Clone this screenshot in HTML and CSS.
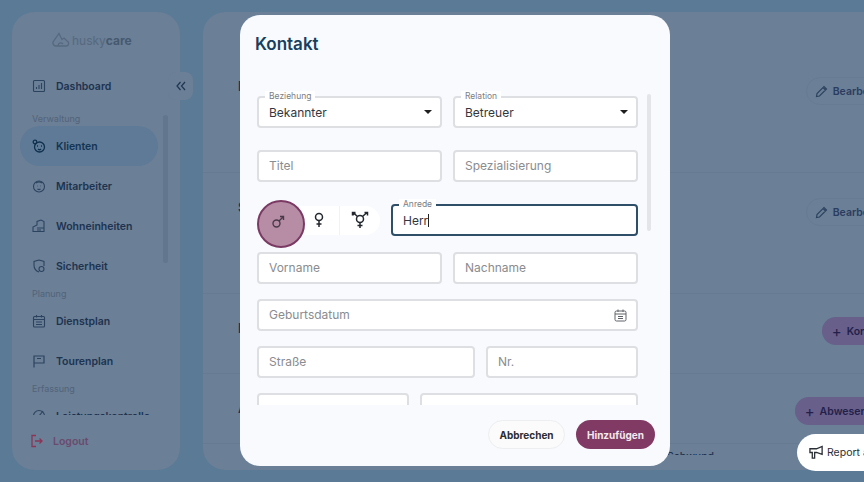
FILE: index.html
```html
<!DOCTYPE html>
<html lang="de">
<head>
    <meta charset="UTF-8">
    <meta name="viewport" content="width=device-width, initial-scale=1.0">
    <title>huskycare - Kontakt</title>
    <link rel="stylesheet" href="styles.css">
</head>
<body>
    <div class="seite">
        <aside class="sidebar">
            <div class="logo">
                <svg width="18" height="15" viewBox="0 0 18 15" fill="none" stroke="#56697f" stroke-width="1.3"><path d="M4 14 H14 C17 14 17.5 10 15 9 L12 6 L10 7.500 L7 1.500 L1 10 C0.500 12 2 14 4 14 Z"/><path d="M6 14 C6 11 9 10 11 12"/></svg>
                <span class="logo-husky">husky</span><span class="logo-care">care</span>
            </div>
            <button class="einklappen">
                <svg width="10" height="10" viewBox="0 0 10 10" fill="none" stroke="#1f3552" stroke-width="1.2"><path d="M4.500 1 L1 5 L4.500 9 M9 1 L5.500 5 L9 9"/></svg>
            </button>
            <nav class="menu">
                <a class="item erstes">
                    <svg class="nav-icon" viewBox="0 0 14 14" fill="none" stroke="#2c4360" stroke-width="1.100"><rect x="1.500" y="1.500" width="11" height="11" rx="1"/><path d="M4.500 10 V8 M7 10 V6 M9.500 10 V4"/></svg>
                    Dashboard
                </a>
                <div class="gruppe">Verwaltung</div>
                <a class="item aktiv">
                    <svg class="nav-icon" viewBox="0 0 14 14" fill="none" stroke="#10304f" stroke-width="1.300"><circle cx="7.500" cy="8" r="5"/><circle cx="3" cy="3" r="1.800"/><path d="M5 7 H6 M9 7 H10 M6 10 C7 11 8 11 9 10"/></svg>
                    Klienten
                </a>
                <a class="item">
                    <svg class="nav-icon" viewBox="0 0 14 14" fill="none" stroke="#2c4360" stroke-width="1.100"><circle cx="7" cy="7.500" r="5.500"/><path d="M4 4 C6 2.500 8 2.500 10 4 M5 7 H5.500 M8.500 7 H9 M5.500 10 C6.500 10.800 7.500 10.800 8.500 10"/></svg>
                    Mitarbeiter
                </a>
                <a class="item">
                    <svg class="nav-icon" viewBox="0 0 14 14" fill="none" stroke="#2c4360" stroke-width="1.100"><path d="M5 6 V2.500 L9 1 L12 2.500 V12.500 H1 V8 L5 6 Z M5 9 H12 M5 11 H9"/></svg>
                    Wohneinheiten
                </a>
                <a class="item">
                    <svg class="nav-icon" viewBox="0 0 14 14" fill="none" stroke="#2c4360" stroke-width="1.100"><path d="M7 1 L12 2.500 V7 M7 13 C4 12 2 10 2 6 V2.500 L7 1"/><circle cx="9.500" cy="10" r="2.500"/></svg>
                    Sicherheit
                </a>
                <div class="gruppe">Planung</div>
                <a class="item">
                    <svg class="nav-icon" viewBox="0 0 14 14" fill="none" stroke="#2c4360" stroke-width="1.100"><rect x="1.500" y="2.500" width="11" height="10.500" rx="1"/><path d="M1.500 5.500 H12.500 M4.500 1 V3.500 M9.500 1 V3.500 M4 8 H10 M4 10.500 H10"/></svg>
                    Dienstplan
                </a>
                <a class="item">
                    <svg class="nav-icon" viewBox="0 0 14 14" fill="none" stroke="#2c4360" stroke-width="1.200"><path d="M2 13.500 V2 H12 V9 H2 M5 4.500 H9"/></svg>
                    Tourenplan
                </a>
                <div class="gruppe">Erfassung</div>
                <a class="item">
                    <svg class="nav-icon" viewBox="0 0 14 14" fill="none" stroke="#2c4360" stroke-width="1.100"><circle cx="7" cy="7" r="5.500"/><path d="M7 7 L11 2"/></svg>
                    Leistungskontrolle
                </a>
            </nav>
            <div class="balken"></div>
            <a class="logout">
                <svg width="14" height="14" viewBox="0 0 14 14" fill="none" stroke="#8c3557" stroke-width="1.300"><path d="M6 1.500 H2 V12.500 H6 M5 7 H12 M9.500 4.500 L12 7 L9.500 9.500"/></svg>
                Logout
            </a>
        </aside>

        <main class="inhalt">
            <section class="abschnitt hoch">
                <h2>Kontakt</h2>
                <a class="pille bearbeiten">
                    <svg width="13" height="13" viewBox="0 0 13 13" fill="none" stroke="#2c4360" stroke-width="1.200"><path d="M1.500 11.500 L2 8.500 L9 1.500 L11.500 4 L4.500 11 Z M8 2.500 L10.500 5"/></svg>
                    Bearbeiten
                </a>
            </section>
            <section class="abschnitt hoch">
                <h2>Status</h2>
                <a class="pille bearbeiten">
                    <svg width="13" height="13" viewBox="0 0 13 13" fill="none" stroke="#2c4360" stroke-width="1.200"><path d="M1.500 11.500 L2 8.500 L9 1.500 L11.500 4 L4.500 11 Z M8 2.500 L10.500 5"/></svg>
                    Bearbeiten
                </a>
            </section>
            <section class="abschnitt mittel">
                <h2>Kontakte</h2>
                <a class="pille lila"><span class="plus">+</span> Kontakt</a>
            </section>
            <section class="abschnitt kurz">
                <h2>Abwesenheit</h2>
                <a class="pille lila"><span class="plus">+</span> Abwesenheit</a>
            </section>
            <div class="fuss">Schwund</div>
        </main>
    </div>

    <a class="report">
        <svg width="15" height="15" viewBox="0 0 16 16" fill="none" stroke="#2b2f36" stroke-width="1.400"><path d="M1 4 H8 L14 1.500 V10 L8 8 H6 V14 H3.500 V8 H1 Z"/></svg>
        Report a bug
    </a>

    <div class="modal">
        <h1>Kontakt</h1>
        <div class="leiste"></div>
        <form class="formular">
            <div class="zeile abstand-gross">
                <div class="feld">
                    <label class="schwebend">Beziehung</label>
                    <span class="wert oben">Bekannter</span>
                    <span class="pfeil"></span>
                </div>
                <div class="feld">
                    <label class="schwebend">Relation</label>
                    <span class="wert oben">Betreuer</span>
                    <span class="pfeil"></span>
                </div>
            </div>
            <div class="zeile abstand-gross">
                <div class="feld"><span class="platzhalter">Titel</span></div>
                <div class="feld"><span class="platzhalter">Spezialisierung</span></div>
            </div>
            <div class="zeile abstand-anrede">
                <div class="geschlecht">
                    <button type="button" class="option gewaehlt">
                        <svg width="14" height="14" viewBox="0 0 14 14" fill="none" stroke="#4a3a48" stroke-width="1.400"><circle cx="5.500" cy="8.500" r="3.500"/><path d="M8 6 L12.500 1.500 M9 1.500 H12.500 V5"/></svg>
                    </button>
                    <button type="button" class="option">
                        <svg width="14" height="16" viewBox="0 0 14 16" fill="none" stroke="#23282e" stroke-width="1.500"><circle cx="7" cy="5" r="3.500"/><path d="M7 8.500 V15 M4.500 12 H9.500"/></svg>
                    </button>
                    <button type="button" class="option">
                        <svg width="18" height="18" viewBox="0 0 18 18" fill="none" stroke="#23282e" stroke-width="1.500"><circle cx="9" cy="8" r="3.500"/><path d="M9 11.500 V17 M6.500 14.500 H11.500 M6.500 5.500 L2 1.500 M11.500 5.500 L16 1.500 M1.500 4.500 V1.500 H4.500 M13.500 1.500 H16.500 V4.500 M2 4 L4.500 1.800"/></svg>
                    </button>
                </div>
                <div class="feld fokus">
                    <label class="schwebend">Anrede</label>
                    <span class="wert">Herr<span class="cursor"></span></span>
                </div>
            </div>
            <div class="zeile abstand-klein">
                <div class="feld"><span class="platzhalter">Vorname</span></div>
                <div class="feld"><span class="platzhalter">Nachname</span></div>
            </div>
            <div class="zeile abstand-klein">
                <div class="feld">
                    <span class="platzhalter">Geburtsdatum</span>
                    <svg class="kalender" width="13" height="13" viewBox="0 0 13 13" fill="none" stroke="#5e6268" stroke-width="1"><rect x="1" y="2" width="11" height="10" rx="1.500"/><path d="M1 5 H12 M4 0.500 V3 M9 0.500 V3 M4 7.500 H9 M4 9.500 H9"/></svg>
                </div>
            </div>
            <div class="zeile abstand-klein">
                <div class="feld strasse"><span class="platzhalter">Straße</span></div>
                <div class="feld"><span class="platzhalter">Nr.</span></div>
            </div>
            <div class="zeile">
                <div class="feld plz"></div>
                <div class="feld"></div>
            </div>
        </form>
        <div class="aktionen">
            <button type="button" class="abbrechen">Abbrechen</button>
            <button type="button" class="hinzufuegen">Hinzufügen</button>
        </div>
    </div>
</body>
</html>
```

FILE: styles.css
```css
* {
    box-sizing: border-box;
}

html, body {
    height: 100%;
}

body {
    margin: 0;
    background-color: #5b7a96;
    font-family: "Inter", "Open Sans", sans-serif;
    overflow: hidden;
    position: relative;
}

.seite {
    display: flex;
    gap: 23px;
    padding: 12px;
    height: 482px;
    width: 960px;
}

/* sidebar */
.sidebar {
    flex: 0 0 168px;
    background-color: #6b7f96;
    border-radius: 22px;
    position: relative;
    display: flex;
    flex-direction: column;
}

.logo {
    height: 54px;
    padding: 20px 0 0 40px;
    display: flex;
    align-items: flex-start;
    font-size: 12px;
    line-height: 18px;
    color: #56697f;
}

.logo svg {
    margin-right: 2px;
}

.logo-care {
    font-weight: 700;
    color: #455970;
}

.einklappen {
    position: absolute;
    left: 156px;
    top: 60px;
    width: 25px;
    height: 28px;
    border: none;
    border-radius: 8px;
    background-color: #6b7f96;
    padding: 0;
}

.menu {
    height: 349px;
    overflow: hidden;
}

.item {
    display: flex;
    align-items: center;
    gap: 10px;
    height: 40px;
    margin: 0 22px 0 8px;
    padding-left: 12px;
    border-radius: 20px;
    font-size: 10.500px;
    font-weight: 600;
    color: #1d3350;
    white-space: nowrap;
}

.item.erstes {
    margin-bottom: 5px;
}

.item.aktiv {
    background-color: #5e7a96;
    color: #143452;
}

.nav-icon {
    width: 14px;
    height: 14px;
    flex: none;
}

.gruppe {
    height: 15px;
    padding-left: 20px;
    font-size: 9px;
    line-height: 15px;
    color: #52647a;
}

.balken {
    position: absolute;
    left: 151px;
    top: 103px;
    width: 5px;
    height: 148px;
    border-radius: 3px;
    background-color: #62768d;
}

.logout {
    display: flex;
    align-items: center;
    gap: 9px;
    padding: 19px 0 0 18px;
    font-size: 10.500px;
    font-weight: 600;
    color: #6a4b6e;
}

/* inhalt hinter dem dialog */
.inhalt {
    flex: 0 0 720px;
    background-color: #6b7f96;
    border-radius: 22px;
    padding-top: 40px;
    overflow: hidden;
}

.abschnitt {
    display: flex;
    justify-content: space-between;
    padding: 0 27px 0 35px;
    border-bottom: 1px solid #667b92;
}

.abschnitt.hoch {
    height: 121px;
}

.abschnitt.mittel {
    height: 80px;
}

.abschnitt.kurz {
    height: 70px;
}

.abschnitt h2 {
    margin: 26px 0 0;
    font-size: 13px;
    color: #1d3350;
}

.pille {
    display: flex;
    align-items: center;
    gap: 5px;
    height: 28px;
    margin-top: 25px;
    padding: 0 10px;
    border-radius: 14px;
    border: 1px solid #677b92;
    font-size: 10.500px;
    font-weight: 600;
    color: #2a3c5f;
}

.pille.bearbeiten {
    margin-right: -3px;
    padding-left: 8px;
}

.pille.lila {
    background-color: #685f8a;
    border: none;
    color: #231f4a;
}

.abschnitt.mittel .pille,
.abschnitt.kurz .pille {
    margin-top: 23px;
}

.plus {
    font-size: 15px;
    font-weight: 400;
}

/* nur die oberkante der zeile ist sichtbar */
.fuss {
    width: 511px;
    height: 11px;
    padding-top: 6px;
    overflow: hidden;
    text-align: right;
    font-size: 10.500px;
    line-height: 14px;
    font-weight: 500;
    color: #1d3350;
}

.report {
    position: absolute;
    left: 797px;
    top: 434px;
    width: 110px;
    height: 37px;
    padding-left: 12px;
    display: flex;
    align-items: center;
    gap: 3px;
    background-color: #fff;
    border-radius: 19px;
    font-size: 10.500px;
    color: #2b2f36;
    white-space: nowrap;
}

/* dialog */
.modal {
    position: absolute;
    left: 240px;
    top: 15px;
    width: 430px;
    height: 451px;
    background-color: #f8fafd;
    border-radius: 20px;
    padding: 18px 15px 0 17px;
}

.modal h1 {
    margin: 0 0 0 -2px;
    font-size: 17px;
    line-height: 22px;
    font-weight: 600;
    color: #17405f;
}

.leiste {
    position: absolute;
    left: 407px;
    top: 79px;
    width: 4px;
    height: 137px;
    border-radius: 2px;
    background-color: #e3e5e9;
}

.formular {
    height: 325px;
    margin-top: 25px;
    padding-top: 16px;
    width: 381px;
    overflow: hidden;
}

.zeile {
    display: flex;
    gap: 11px;
    align-items: center;
}

.abstand-gross {
    margin-bottom: 22px;
}

.abstand-anrede {
    margin-bottom: 16px;
}

.abstand-klein {
    margin-bottom: 15px;
}

.feld {
    flex: 1 1 0;
    height: 32px;
    position: relative;
    display: flex;
    align-items: center;
    background-color: #fff;
    border: 2px solid #dddfe2;
    border-radius: 4px;
    padding-left: 10px;
    font-size: 12px;
}

.feld.fokus {
    flex: 0 0 247px;
    border-color: #2f4e68;
}

.feld.strasse {
    flex: 0 0 218px;
}

.feld.plz {
    flex: 0 0 152px;
}

.schwebend {
    position: absolute;
    left: 6px;
    top: -7px;
    padding: 0 4px;
    font-size: 8.500px;
    line-height: 11px;
    color: #7b7e83;
    background-color: #fff;
}

.wert {
    color: #33373d;
}

.wert.oben {
    margin-top: 1px;
}

.platzhalter {
    color: #8a8c90;
    margin-top: -2px;
}

.cursor {
    display: inline-block;
    width: 1px;
    height: 13px;
    vertical-align: -2px;
    background-color: #222;
}

.pfeil {
    position: absolute;
    right: 8px;
    top: 12px;
    border-left: 4px solid transparent;
    border-right: 4px solid transparent;
    border-top: 4px solid #1f1f1f;
}

.kalender {
    position: absolute;
    right: 9px;
    top: 8px;
}

.geschlecht {
    flex: 0 0 123px;
    height: 29px;
    display: flex;
    background-color: #fff;
    border-radius: 15px;
    position: relative;
}

.option {
    flex: 0 0 41px;
    border: none;
    background: none;
    padding: 0;
    display: flex;
    align-items: center;
    justify-content: center;
    border-left: 1px solid #f1f2f4;
}

.option.gewaehlt {
    position: relative;
    z-index: 1;
    flex: 0 0 48px;
    height: 48px;
    margin: -6px -7px -13px 0;
    padding: 0 6px 4px 0;
    border: 2px solid #7a3a63;
    border-radius: 50%;
    background-color: #b78da6;
}

.aktionen {
    display: flex;
    justify-content: flex-end;
    gap: 11px;
    margin-top: 15px;
}

.aktionen button {
    height: 29px;
    border-radius: 15px;
    font-family: inherit;
    font-size: 10px;
    font-weight: 700;
}

.abbrechen {
    width: 77px;
    background-color: #fbfbfc;
    border: 1px solid #eceef0;
    color: #2b2c30;
}

.hinzufuegen {
    width: 79px;
    background-color: #813a63;
    border: none;
    color: #f4e9ef;
}
```
